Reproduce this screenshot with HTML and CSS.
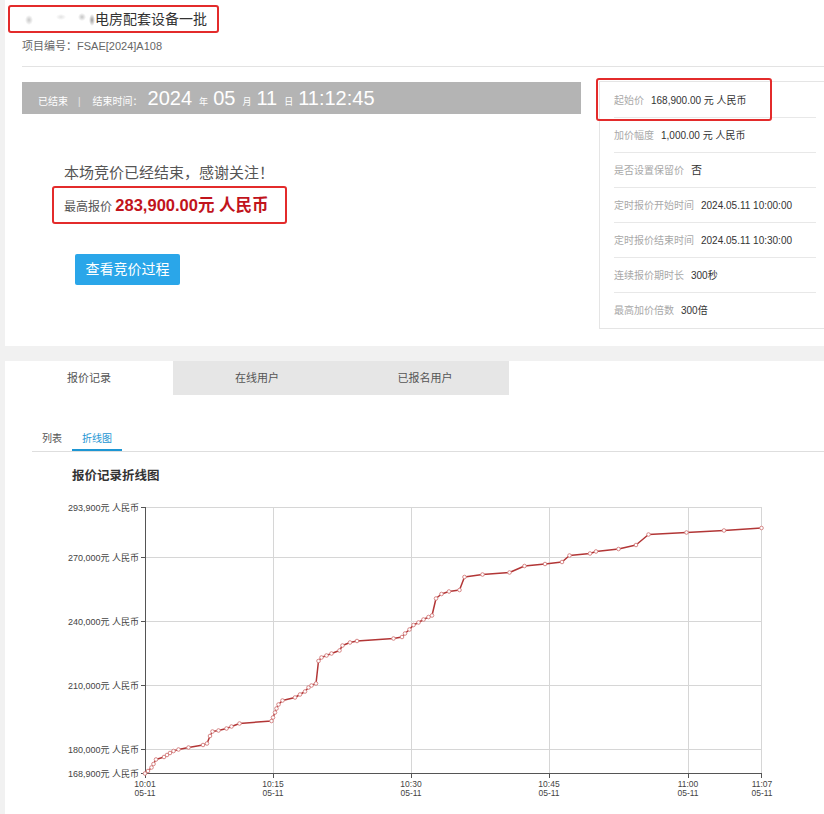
FILE: index.html
```html
<!DOCTYPE html>
<html lang="zh-CN">
<head>
<meta charset="utf-8">
<title>竞价结果</title>
<link rel="stylesheet" href="styles.css">
</head>
<body>
<div class="page">
  <section class="card card-top">
    <div class="head">
      <h1 class="title"><span class="redact"></span>电房配套设备一批</h1>
      <div class="code">项目编号：FSAE[2024]A108</div>
    </div>
    <div class="main">
      <div class="left">
        <div class="timebar">
          <span class="st">已结束</span><span class="sep">|</span><span class="st">结束时间：</span><span class="num">2024</span><span class="u">年</span><span class="num">05</span><span class="u">月</span><span class="num">11</span><span class="u">日</span><span class="num">11:12:45</span>
        </div>
        <div class="result">
          <p class="ended">本场竞价已经结束，感谢关注！</p>
          <p class="highest">最高报价 <strong>283,900.00元 人民币</strong></p>
          <button class="btn" type="button">查看竞价过程</button>
        </div>
      </div>
      <ul class="info">
        <li class="marked"><span class="k">起始价</span><span class="v">168,900.00 元 人民币</span></li>
        <li><span class="k">加价幅度</span><span class="v">1,000.00 元 人民币</span></li>
        <li><span class="k">是否设置保留价</span><span class="v big">否</span></li>
        <li><span class="k">定时报价开始时间</span><span class="v">2024.05.11 10:00:00</span></li>
        <li><span class="k">定时报价结束时间</span><span class="v">2024.05.11 10:30:00</span></li>
        <li><span class="k">连续报价期时长</span><span class="v">300秒</span></li>
        <li><span class="k">最高加价倍数</span><span class="v">300倍</span></li>
      </ul>
    </div>
  </section>

  <section class="card card-bottom">
    <div class="tabs">
      <div class="tab active">报价记录</div>
      <div class="tab">在线用户</div>
      <div class="tab">已报名用户</div>
    </div>
    <div class="subtabs">
      <div class="subtab">列表</div>
      <div class="subtab active">折线图</div>
    </div>
    <div class="chart-title">报价记录折线图</div>
    <svg class="chart" width="760" height="310" viewBox="40 494 760 310" xmlns="http://www.w3.org/2000/svg">
      <g class="grid" stroke="#d6d6d6" stroke-width="1" shape-rendering="crispEdges">
        <line x1="145" y1="506.5" x2="762" y2="506.5"/>
        <line x1="145" y1="556.5" x2="762" y2="556.5"/>
        <line x1="145" y1="620.5" x2="762" y2="620.5"/>
        <line x1="145" y1="684.5" x2="762" y2="684.5"/>
        <line x1="145" y1="748.5" x2="762" y2="748.5"/>
        <line x1="273.5" y1="506" x2="273.5" y2="772"/>
        <line x1="411.5" y1="506" x2="411.5" y2="772"/>
        <line x1="549.5" y1="506" x2="549.5" y2="772"/>
        <line x1="688.5" y1="506" x2="688.5" y2="772"/>
        <line x1="761.5" y1="506" x2="761.5" y2="772"/>
      </g>
      <g class="axes" stroke="#555" stroke-width="1" shape-rendering="crispEdges">
        <line x1="145.5" y1="506" x2="145.5" y2="773"/>
        <line x1="145" y1="772.5" x2="762" y2="772.5"/>
        <line x1="141" y1="506.5" x2="145" y2="506.5"/>
        <line x1="141" y1="556.5" x2="145" y2="556.5"/>
        <line x1="141" y1="620.5" x2="145" y2="620.5"/>
        <line x1="141" y1="684.5" x2="145" y2="684.5"/>
        <line x1="141" y1="748.5" x2="145" y2="748.5"/>
        <line x1="141" y1="772.5" x2="145" y2="772.5"/>
        <line x1="145.5" y1="772" x2="145.5" y2="777"/>
        <line x1="273.5" y1="772" x2="273.5" y2="777"/>
        <line x1="411.5" y1="772" x2="411.5" y2="777"/>
        <line x1="549.5" y1="772" x2="549.5" y2="777"/>
        <line x1="688.5" y1="772" x2="688.5" y2="777"/>
        <line x1="761.5" y1="772" x2="761.5" y2="777"/>
      </g>
      <g class="ylabels" text-anchor="end">
        <text x="139" y="509.5">293,900元 人民币</text>
        <text x="139" y="559.5">270,000元 人民币</text>
        <text x="139" y="623.5">240,000元 人民币</text>
        <text x="139" y="687.5">210,000元 人民币</text>
        <text x="139" y="751.5">180,000元 人民币</text>
        <text x="139" y="775.5">168,900元 人民币</text>
      </g>
      <g class="xlabels" text-anchor="middle">
        <text x="145" y="785.5">10:01</text><text x="145" y="795">05-11</text>
        <text x="273" y="785.5">10:15</text><text x="273" y="795">05-11</text>
        <text x="411" y="785.5">10:30</text><text x="411" y="795">05-11</text>
        <text x="549" y="785.5">10:45</text><text x="549" y="795">05-11</text>
        <text x="688" y="785.5">11:00</text><text x="688" y="795">05-11</text>
        <text x="762" y="785.5">11:07</text><text x="762" y="795">05-11</text>
      </g>
      <polyline id="series" fill="none" stroke="#b23636" stroke-width="1.5" stroke-linejoin="round"
        points="145,772.5 148,770 151.5,766.5 153.5,763 156,758.5 164,756 167,754 170,752 173.5,750 178.5,748.5 188.5,746.5 203,744 207,742.5 210,735 212.5,730.5 218.5,729.5 226.5,727.5 231.5,725.5 239.5,722.5 271.5,720 273,716.5 275,711.5 276.5,707.5 278.5,703.5 282.5,699.5 295,696.5 300,693.5 305,690.5 308.5,686.5 311.5,684.5 316,682.5 318.5,660 321.5,656.5 326.5,654.5 331.5,652.5 339.5,649.5 342.5,644.5 350,641.5 357,640 393.5,637.5 402,636 405,632.5 409.5,628.5 413.5,624 418.5,621.5 423.5,618.5 428.5,616 432,614.5 436,597.5 441.5,593 449,590.5 459.5,589 464.5,576 482.5,573.5 509.5,571.5 524.5,565 545,563 562,561 569.5,554.5 590,552.5 596,550.5 618.5,548 636,544 648.5,533.5 686.5,531.5 724,529.5 761.5,527"/>
      <g class="dots" fill="#fff" stroke="#d27a7a" stroke-width="0.9">
        <circle cx="145" cy="772.5" r="1.8"/><circle cx="148" cy="770" r="1.8"/><circle cx="151.5" cy="766.5" r="1.8"/><circle cx="153.5" cy="763" r="1.8"/><circle cx="156" cy="758.5" r="1.8"/><circle cx="164" cy="756" r="1.8"/><circle cx="167" cy="754" r="1.8"/><circle cx="170" cy="752" r="1.8"/><circle cx="173.5" cy="750" r="1.8"/><circle cx="178.5" cy="748.5" r="1.8"/><circle cx="188.5" cy="746.5" r="1.8"/><circle cx="203" cy="744" r="1.8"/><circle cx="207" cy="742.5" r="1.8"/><circle cx="210" cy="735" r="1.8"/><circle cx="212.5" cy="730.5" r="1.8"/><circle cx="218.5" cy="729.5" r="1.8"/><circle cx="226.5" cy="727.5" r="1.8"/><circle cx="231.5" cy="725.5" r="1.8"/><circle cx="239.5" cy="722.5" r="1.8"/><circle cx="271.5" cy="720" r="1.8"/><circle cx="273" cy="716.5" r="1.8"/><circle cx="275" cy="711.5" r="1.8"/><circle cx="276.5" cy="707.5" r="1.8"/><circle cx="278.5" cy="703.5" r="1.8"/><circle cx="282.5" cy="699.5" r="1.8"/><circle cx="295" cy="696.5" r="1.8"/><circle cx="300" cy="693.5" r="1.8"/><circle cx="305" cy="690.5" r="1.8"/><circle cx="308.5" cy="686.5" r="1.8"/><circle cx="311.5" cy="684.5" r="1.8"/><circle cx="316" cy="682.5" r="1.8"/><circle cx="318.5" cy="660" r="1.8"/><circle cx="321.5" cy="656.5" r="1.8"/><circle cx="326.5" cy="654.5" r="1.8"/><circle cx="331.5" cy="652.5" r="1.8"/><circle cx="339.5" cy="649.5" r="1.8"/><circle cx="342.5" cy="644.5" r="1.8"/><circle cx="350" cy="641.5" r="1.8"/><circle cx="357" cy="640" r="1.8"/><circle cx="393.5" cy="637.5" r="1.8"/><circle cx="402" cy="636" r="1.8"/><circle cx="405" cy="632.5" r="1.8"/><circle cx="409.5" cy="628.5" r="1.8"/><circle cx="413.5" cy="624" r="1.8"/><circle cx="418.5" cy="621.5" r="1.8"/><circle cx="423.5" cy="618.5" r="1.8"/><circle cx="428.5" cy="616" r="1.8"/><circle cx="432" cy="614.5" r="1.8"/><circle cx="436" cy="597.5" r="1.8"/><circle cx="441.5" cy="593" r="1.8"/><circle cx="449" cy="590.5" r="1.8"/><circle cx="459.5" cy="589" r="1.8"/><circle cx="464.5" cy="576" r="1.8"/><circle cx="482.5" cy="573.5" r="1.8"/><circle cx="509.5" cy="571.5" r="1.8"/><circle cx="524.5" cy="565" r="1.8"/><circle cx="545" cy="563" r="1.8"/><circle cx="562" cy="561" r="1.8"/><circle cx="569.5" cy="554.5" r="1.8"/><circle cx="590" cy="552.5" r="1.8"/><circle cx="596" cy="550.5" r="1.8"/><circle cx="618.5" cy="548" r="1.8"/><circle cx="636" cy="544" r="1.8"/><circle cx="648.5" cy="533.5" r="1.8"/><circle cx="686.5" cy="531.5" r="1.8"/><circle cx="724" cy="529.5" r="1.8"/><circle cx="761.5" cy="527" r="1.8"/>
      </g>
    </svg>
  </section>
</div>
</body>
</html>
```

FILE: styles.css
```css
* { box-sizing: border-box; }

html, body {
  margin: 0;
  padding: 0;
}

body {
  background: #f1f1f1;
  font-family: "Liberation Sans", "Noto Sans CJK SC", sans-serif;
  color: #333;
  width: 824px;
  height: 814px;
  overflow: hidden;
}

.page {
  width: 840px;
}

.card {
  background: #fff;
  margin-left: 5px;
}

/* ---------- top card ---------- */
.card-top {
  padding: 5px 0 17px;
}

.head {
  margin-left: 17px;
  padding-bottom: 12px;
  border-bottom: 1px solid #e3e3e3;
}

.title {
  display: inline-block;
  margin: 0 0 0 -14px;
  padding: 0 10px 0 14px;
  height: 28px;
  line-height: 24px;
  font-size: 14px;
  font-weight: normal;
  color: #333;
  border: 2px solid #e32b2b;
  border-radius: 3px;
}

.redact {
  display: inline-block;
  width: 71px;
  height: 14px;
  vertical-align: -2px;
  background:
    radial-gradient(ellipse 4px 5px at 5px 8px, #c8c8c8, rgba(255,255,255,0)),
    radial-gradient(ellipse 5px 3px at 37px 5px, #e2e2e2, rgba(255,255,255,0)),
    radial-gradient(ellipse 4px 4px at 58px 5px, #c4c4c4, rgba(255,255,255,0)),
    radial-gradient(ellipse 3px 6px at 68px 8px, #9a9a9a, rgba(255,255,255,0));
  filter: blur(0.6px);
}

.code {
  margin-top: 5px;
  font-size: 11px;
  line-height: 16px;
  color: #666;
}

.main {
  display: flex;
  align-items: flex-start;
  margin-left: 17px;
  padding-top: 14px;
}

.left {
  width: 559px;
  margin-top: 1px;
  margin-right: 18px;
  flex-shrink: 0;
}

.timebar {
  height: 32px;
  line-height: 32px;
  background: #b4b4b4;
  color: #fff;
  padding-left: 16px;
  white-space: nowrap;
  overflow: hidden;
}

.timebar .st {
  font-size: 10px;
}

.timebar .sep {
  font-size: 10px;
  margin: 0 12px 0 10px;
  color: #e8e8e8;
}

.timebar .num {
  font-size: 20px;
  margin-left: 5px;
}

.timebar .u {
  font-size: 9px;
  margin: 0 0 0 7px;
}

.result {
  padding: 49px 0 0 30px;
}

.ended {
  margin: 0 0 3px 12px;
  font-size: 15px;
  line-height: 20px;
  color: #555;
}

.highest {
  display: inline-block;
  margin: 0;
  height: 38px;
  padding: 0 16px 0 10px;
  border: 2px solid #e32b2b;
  border-radius: 3px;
  line-height: 34px;
  font-size: 12px;
  color: #555;
}

.highest strong {
  font-size: 16.5px;
  color: #c1141c;
}

.btn {
  display: block;
  margin: 30px 0 0 23px;
  width: 105px;
  height: 31px;
  padding: 0;
  border: 0;
  border-radius: 2px;
  background: #2aa6e9;
  color: #fff;
  font-family: inherit;
  font-size: 14px;
  line-height: 31px;
}

.info {
  list-style: none;
  margin: 0;
  padding: 1px 0 0;
  width: 232px;
  flex-shrink: 0;
  border: 1px solid #e5e5e5;
}

.info li {
  position: relative;
  display: flex;
  gap: 7px;
  height: 35px;
  margin: 0 14px;
  border-bottom: 1px solid #e8e8e8;
  line-height: 35px;
  font-size: 10px;
  white-space: nowrap;
}

.info li:last-child {
  border-bottom: 0;
}

.info .k {
  color: #a8a8a8;
}

.info .v {
  color: #333;
}

.info .v.big {
  font-size: 11px;
}

.info li.marked::after {
  content: "";
  position: absolute;
  left: -18px;
  top: -5px;
  width: 172px;
  height: 39px;
  border: 2px solid #e32b2b;
  border-radius: 3px;
}

/* ---------- bottom card ---------- */
.card-bottom {
  margin-top: 15px;
  height: 460px;
}

.tabs {
  display: flex;
  height: 34px;
}

.tab {
  width: 168px;
  text-align: center;
  line-height: 34px;
  font-size: 11px;
  color: #555;
  background: #e6e6e6;
}

.tab.active {
  background: #fff;
}

.subtabs {
  display: flex;
  margin: 30px 8px 0 27px;
  border-bottom: 1px solid #dedede;
}

.subtab {
  padding: 0 10px;
  height: 26px;
  line-height: 27px;
  font-size: 10px;
  color: #555;
}

.subtab.active {
  color: #1d96d3;
  box-shadow: inset 0 -2px 0 #1d96d3;
}

.chart-title {
  margin: 15px 0 0 67px;
  font-size: 12.5px;
  font-weight: bold;
  line-height: 18px;
  color: #333;
}

.chart {
  display: block;
  margin: 10px 0 0 35px;
  font-family: "Liberation Sans", "Noto Sans CJK SC", sans-serif;
}

.chart text {
  font-size: 9px;
  fill: #444;
}

.chart .xlabels text {
  font-size: 8.5px;
}
```
